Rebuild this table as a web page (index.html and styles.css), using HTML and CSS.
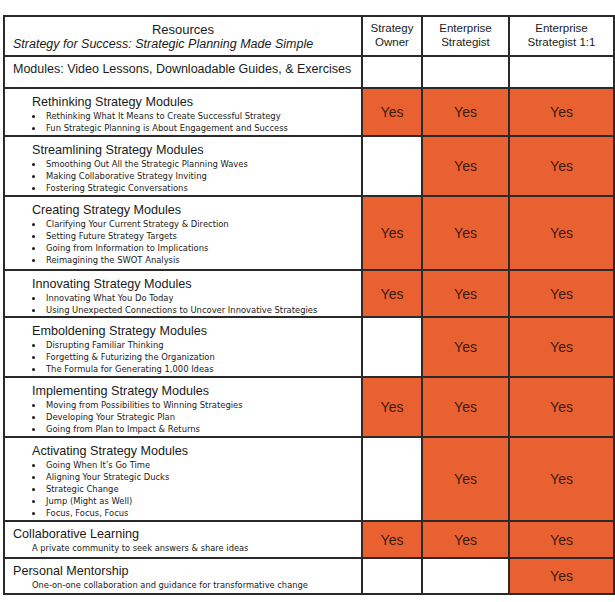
FILE: index.html
```html
<!DOCTYPE html>
<html>
<head>
<meta charset="utf-8">
<link rel="stylesheet" href="styles.css">
</head>
<body>
<table class="grid">
  <colgroup>
    <col class="c-res"><col class="c-own"><col class="c-ent"><col class="c-one">
  </colgroup>
  <tr class="r-head">
    <th class="res-head">
      <div class="res-title">Resources</div>
      <div class="res-sub">Strategy for Success: Strategic Planning Made Simple</div>
    </th>
    <th class="col-head">Strategy<br>Owner</th>
    <th class="col-head">Enterprise<br>Strategist</th>
    <th class="col-head">Enterprise<br>Strategist 1:1</th>
  </tr>
  <tr class="r-mod">
    <td class="section">Modules: Video Lessons, Downloadable Guides, &amp; Exercises</td>
    <td></td><td></td><td></td>
  </tr>
  <tr class="r-h48">
    <td class="mod">
      <div class="mod-title">Rethinking Strategy Modules</div>
      <ul class="items">
        <li>Rethinking What It Means to Create Successful Strategy</li>
        <li>Fun Strategic Planning is About Engagement and Success</li>
      </ul>
    </td>
    <td class="yes">Yes</td><td class="yes">Yes</td><td class="yes">Yes</td>
  </tr>
  <tr class="r-h60">
    <td class="mod">
      <div class="mod-title">Streamlining Strategy Modules</div>
      <ul class="items">
        <li>Smoothing Out All the Strategic Planning Waves</li>
        <li>Making Collaborative Strategy Inviting</li>
        <li>Fostering Strategic Conversations</li>
      </ul>
    </td>
    <td></td><td class="yes">Yes</td><td class="yes">Yes</td>
  </tr>
  <tr class="r-h74">
    <td class="mod">
      <div class="mod-title">Creating Strategy Modules</div>
      <ul class="items">
        <li>Clarifying Your Current Strategy &amp; Direction</li>
        <li>Setting Future Strategy Targets</li>
        <li>Going from Information to Implications</li>
        <li>Reimagining the SWOT Analysis</li>
      </ul>
    </td>
    <td class="yes">Yes</td><td class="yes">Yes</td><td class="yes">Yes</td>
  </tr>
  <tr class="r-h47">
    <td class="mod">
      <div class="mod-title">Innovating Strategy Modules</div>
      <ul class="items">
        <li>Innovating What You Do Today</li>
        <li>Using Unexpected Connections to Uncover Innovative Strategies</li>
      </ul>
    </td>
    <td class="yes">Yes</td><td class="yes">Yes</td><td class="yes">Yes</td>
  </tr>
  <tr class="r-h60">
    <td class="mod">
      <div class="mod-title">Emboldening Strategy Modules</div>
      <ul class="items">
        <li>Disrupting Familiar Thinking</li>
        <li>Forgetting &amp; Futurizing the Organization</li>
        <li>The Formula for Generating 1,000 Ideas</li>
      </ul>
    </td>
    <td></td><td class="yes">Yes</td><td class="yes">Yes</td>
  </tr>
  <tr class="r-h60">
    <td class="mod">
      <div class="mod-title">Implementing Strategy Modules</div>
      <ul class="items">
        <li>Moving from Possibilities to Winning Strategies</li>
        <li>Developing Your Strategic Plan</li>
        <li>Going from Plan to Impact &amp; Returns</li>
      </ul>
    </td>
    <td class="yes">Yes</td><td class="yes">Yes</td><td class="yes">Yes</td>
  </tr>
  <tr class="r-h84">
    <td class="mod">
      <div class="mod-title">Activating Strategy Modules</div>
      <ul class="items">
        <li>Going When It’s Go Time</li>
        <li>Aligning Your Strategic Ducks</li>
        <li>Strategic Change</li>
        <li>Jump (Might as Well)</li>
        <li>Focus, Focus, Focus</li>
      </ul>
    </td>
    <td></td><td class="yes">Yes</td><td class="yes">Yes</td>
  </tr>
  <tr class="r-h37">
    <td class="section">
      <div class="sec-title">Collaborative Learning</div>
      <div class="sec-desc">A private community to seek answers &amp; share ideas</div>
    </td>
    <td class="yes">Yes</td><td class="yes">Yes</td><td class="yes">Yes</td>
  </tr>
  <tr class="r-h36">
    <td class="section">
      <div class="sec-title">Personal Mentorship</div>
      <div class="sec-desc">One-on-one collaboration and guidance for transformative change</div>
    </td>
    <td></td><td></td><td class="yes">Yes</td>
  </tr>
</table>
</body>
</html>
```

FILE: styles.css
```css
html, body {
  margin: 0;
  padding: 0;
  background: #ffffff;
}
body {
  padding: 15px 0 0 3px;
  font-family: "Liberation Sans", Arial, sans-serif;
  color: #1a1a1a;
}
.grid {
  border-collapse: collapse;
  table-layout: fixed;
  width: 610px;
}
.c-res { width: 358px; }
.c-own { width: 60px; }
.c-ent { width: 87px; }
.c-one { width: 105px; }
.grid th, .grid td {
  border: 2px solid #2a2a2a;
  padding: 0;
}
.grid th {
  font-weight: normal;
}
.r-head { height: 40px; }
.r-mod { height: 32px; }
.r-h48 { height: 48px; }
.r-h60 { height: 60px; }
.r-h74 { height: 74px; }
.r-h47 { height: 47px; }
.r-h84 { height: 84px; }
.r-h37 { height: 37px; }
.r-h36 { height: 36px; }

.grid .res-head {
  text-align: center;
  vertical-align: top;
  padding-top: 5px;
}
.res-title {
  font-size: 13px;
  line-height: 15px;
}
.res-sub {
  font-style: italic;
  font-size: 12.5px;
  line-height: 15px;
  text-align: left;
  padding-left: 8px;
}
.grid .col-head {
  text-align: center;
  vertical-align: middle;
  font-size: 11.5px;
  line-height: 14px;
  padding-bottom: 2px;
}
.grid .section {
  vertical-align: top;
  padding: 5px 0 0 8px;
  font-size: 12.5px;
  line-height: 15px;
}
.sec-title {
  font-size: 12.6px;
  line-height: 15px;
}
.sec-desc {
  font-family: "DejaVu Sans", Verdana, sans-serif;
  font-size: 8.3px;
  line-height: 12px;
  padding-left: 19px;
}
.grid .mod {
  vertical-align: top;
  padding: 5px 0 0 27px;
}
.mod-title {
  font-size: 12.6px;
  line-height: 16px;
}
.items {
  list-style: none;
  margin: 0;
  padding: 0;
  font-family: "DejaVu Sans", Verdana, sans-serif;
  font-size: 8.4px;
  line-height: 12px;
}
.items li {
  position: relative;
  padding-left: 14px;
}
.items li::before {
  content: "";
  position: absolute;
  left: 0;
  top: 5px;
  width: 3px;
  height: 3px;
  border-radius: 50%;
  background: #1a1a1a;
}
.grid .yes {
  background: #ea6131;
  color: #3a1a12;
  text-align: center;
  vertical-align: middle;
  font-size: 14px;
}
```
